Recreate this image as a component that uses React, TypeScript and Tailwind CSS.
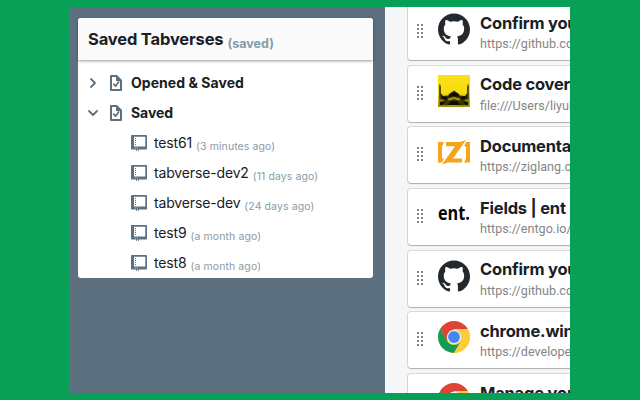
import React from "react";
import { SiGithub } from "react-icons/si";

const DocIcon = () => (
  <svg viewBox="0 0 16 16" className="h-4 w-4 shrink-0" fill="#5c7080">
    <path fillRule="evenodd" d="M9 0H3c-.55 0-1 .45-1 1v14c0 .55.45 1 1 1h10c.55 0 1-.45 1-1V5L9 0zm3 14H4V2h4v4h4v8z" />
    <path d="m5.7 9.2 1.9 2 3-4.2" fill="none" stroke="#5c7080" strokeWidth="1.7" strokeLinecap="round" strokeLinejoin="round" />
  </svg>
);

const BookIcon = () => (
  <svg viewBox="0 0 16 16" className="h-4 w-4 shrink-0">
    <path fill="#5c7080" fillRule="evenodd" d="M1 0h14c.6 0 1 .4 1 1v12.500c0 .6-.4 1-1 1H8v1.200h-1v-1.200H6v1.200H5v-1.200H1c-.6 0-1-.4-1-1V1c0-.6.4-1 1-1zm2 1.700v9.800h11.300V1.700H3z" />
    <path d="M4.500 3v8" stroke="#5c7080" strokeWidth="1" strokeDasharray="1 1" />
    <path d="M4 13h4" stroke="#fff" strokeWidth=".7" strokeDasharray="1 1" strokeOpacity=".7" />
  </svg>
);

const Chevron = ({ open }: { open?: boolean }) => (
  <svg viewBox="0 0 16 16" className="h-4 w-4 shrink-0" fill="none" stroke="#5c7080" strokeWidth="1.8" strokeLinecap="round" strokeLinejoin="round">
    <path d={open ? "m4 6 4 4 4-4" : "m6 4 4 4-4 4"} />
  </svg>
);

const Handle = () => (
  <svg viewBox="0 0 6 14" className="h-[14px] w-[6px] shrink-0" fill="#7b8084">
    {[0, 4, 8, 12].map((y) => (
      <g key={y}>
        <rect x="0" y={y} width="2" height="2" rx=".3" />
        <rect x="4" y={y} width="2" height="2" rx=".3" />
      </g>
    ))}
  </svg>
);

const Coverage = () => (
  <svg viewBox="0 0 32 32" className="h-8 w-8 overflow-hidden">
    <defs>
      <linearGradient id="sky" x1="0" y1="0" x2="0" y2="1">
        <stop offset="0" stopColor="#fbe116" />
        <stop offset=".55" stopColor="#f5dc10" />
        <stop offset="1" stopColor="#a39207" />
      </linearGradient>
      <filter id="soft"><feGaussianBlur stdDeviation=".7" /></filter>
    </defs>
    <path fill="url(#sky)" d="M0 0h32v32H0z" />
    <g filter="url(#soft)">
      <path fill="#8d7f08" d="M1 20V9h1.500v9L5 21l5-1 1 11H1zM31 20V9h-1.500v9L27 21l-5-1-1 11h10z" />
      <path fill="#3a3403" d="M1.500 11h1.300v7L5 21h5l1-2 5-3.500L21 19l1 2h5l2.200-3v-7h1.300v13l-4 1v5H6v-5l-4.500-1z" />
      <path fill="#0b0a00" d="M10 22l2-3 4-2 4 2 2 3-6-1zM3 21l6 1 1 3-5-1zm26 0-6 1-1 3 5-1z" />
      <path fill="#a99709" d="m9 24 7-2 7 2-2 1.500-5-1.500-5 1.500z" />
      <path fill="#0b0a00" d="M10 30l3-4h6l3 4zM2 27l5-1-2 4H2zm28 0-5-1 2 4h3z" />
    </g>
  </svg>
);

const Zig = () => (
  <svg viewBox="0 0 32 32" className="h-8 w-8" fill="#f7a41d">
    <path d="M0 6h6L4 10.200v12.200h2L4 26.600H0zM32 6v20.600h-6l2-4.200V10.200h-2L28 6z" />
    <path d="M8 6h14l6-2-13 18.400h9v4.200H10l-6 2 13-18.400H8z" />
  </svg>
);

const Chrome = () => (
  <svg viewBox="0 0 32 32" className="h-8 w-8">
    <circle cx="16" cy="16" r="16" fill="#fbcd3b" />
    <path fill="#db4437" d="M2.15 8A16 16 0 0 1 29.85 8H16L9.1 20z" />
    <path fill="#0f9d58" d="M2.15 8 9.07 20A8 8 0 0 0 22.93 20L16 32A16 16 0 0 1 2.15 8z" />
    <path fill="#fbcd3b" d="M16 8h13.85A16 16 0 0 1 16 32l6.93-12z" />
    <circle cx="16" cy="16" r="7.2" fill="#f3f3f3" />
    <circle cx="16" cy="16" r="5.9" fill="#4285f4" />
  </svg>
);

const Github = () => <SiGithub className="h-8 w-8 text-[#24292e]" />;

const Ent = () => (
  <svg viewBox="0 0 32 32" className="h-8 w-8 overflow-visible">
    <text x="0" y="22" textLength="32" lengthAdjust="spacingAndGlyphs" fontFamily="Open Sans, sans-serif" fontWeight="700" fontSize="20" fill="#050505">ent.</text>
  </svg>
);

const tabs = [
  { icon: Github, title: "Confirm you", url: "https://github.co" },
  { icon: Coverage, title: "Code cover", url: "file:///Users/liyuh" },
  { icon: Zig, title: "Documenta", url: "https://ziglang.o" },
  { icon: Ent, title: "Fields | ent", url: "https://entgo.io/" },
  { icon: Github, title: "Confirm you", url: "https://github.co" },
  { icon: Chrome, title: "chrome.win", url: "https://develope" },
  { icon: Chrome, title: "Manage you", url: "https://develope" },
];

const saved = [
  ["test61", "(3 minutes ago)"],
  ["tabverse-dev2", "(11 days ago)"],
  ["tabverse-dev", "(24 days ago)"],
  ["test9", "(a month ago)"],
  ["test8", "(a month ago)"],
];

export default function App() {
  return (
    <div className="h-[400px] w-[640px] overflow-hidden bg-[#089f56] px-[70px] py-[7px] font-['Inter',sans-serif] text-[#182026]">
      <div className="flex h-[386px] w-[500px] overflow-hidden bg-[#f5f6f8]">
        <aside className="w-[315px] shrink-0 bg-[#5c7080] pt-[11px] pl-2">
          <div className="h-[260px] w-[295px] rounded-[3px] bg-white">
            <header className="flex h-[42px] items-baseline gap-1 rounded-t-[3px] bg-[#fafafa] pt-[9px] pl-[10px] leading-6 shadow-[0_1px_3px_rgba(16,22,26,0.45)]">
              <h1 className="text-[16.5px] font-bold tracking-[-0.16px]">Saved Tabverses</h1>
              <span className="relative top-[3px] text-[12.6px] font-bold text-[#8a9ba8]">(saved)</span>
            </header>
            <div className="pt-[7px]">
              <div className="flex h-[30px] items-center pl-[7px]">
                <span className="mt-px flex"><Chevron /></span>
                <span className="mt-px ml-[7px] flex"><DocIcon /></span>
                <span className="ml-[7px] text-[14px] font-bold tracking-[0.05px]">Opened &amp; Saved</span>
              </div>
              <div className="flex h-[30px] items-center pl-[7px]">
                <span className="mt-px flex"><Chevron open /></span>
                <span className="mt-px ml-[7px] flex"><DocIcon /></span>
                <span className="ml-[7px] text-[14px] font-bold tracking-[-0.05px]">Saved</span>
              </div>
              {saved.map(([name, age]) => (
                <div key={name} className="flex h-[30px] items-center pl-[53px]">
                  <span className="mt-px flex"><BookIcon /></span>
                  <span className="ml-[7px] text-[14px] tracking-[-0.15px]">{name}</span>
                  <span className="mt-[9px] ml-[4px] text-[10.5px] tracking-[0.1px] text-[#8a9ba8]">{age}</span>
                </div>
              ))}
            </div>
          </div>
        </aside>
        <main className="-mt-[3px] flex flex-col gap-[5.7px] pl-[23px]">
          {tabs.map(({ icon: Icon, title, url }, i) => (
            <div key={i} className="flex h-[56px] w-[300px] shrink-0 items-start rounded-[3px] bg-white pl-[9px] shadow-[0_0_0_1px_rgba(16,22,26,0.13),0_1px_1px_rgba(16,22,26,0.2)]">
              <span className="mt-[20px] flex"><Handle /></span>
              <span className="mt-[9px] ml-[15px] flex"><Icon /></span>
              <div className="ml-[10px] pt-[8.5px] whitespace-nowrap">
                <div className="text-[16.5px] leading-5 font-bold tracking-[-0.2px]">{title}</div>
                <div className="mt-[2.4px] font-['Roboto',sans-serif] text-[12.6px] leading-[18px] text-[#858585]">{url}</div>
              </div>
            </div>
          ))}
        </main>
      </div>
    </div>
  );
}
